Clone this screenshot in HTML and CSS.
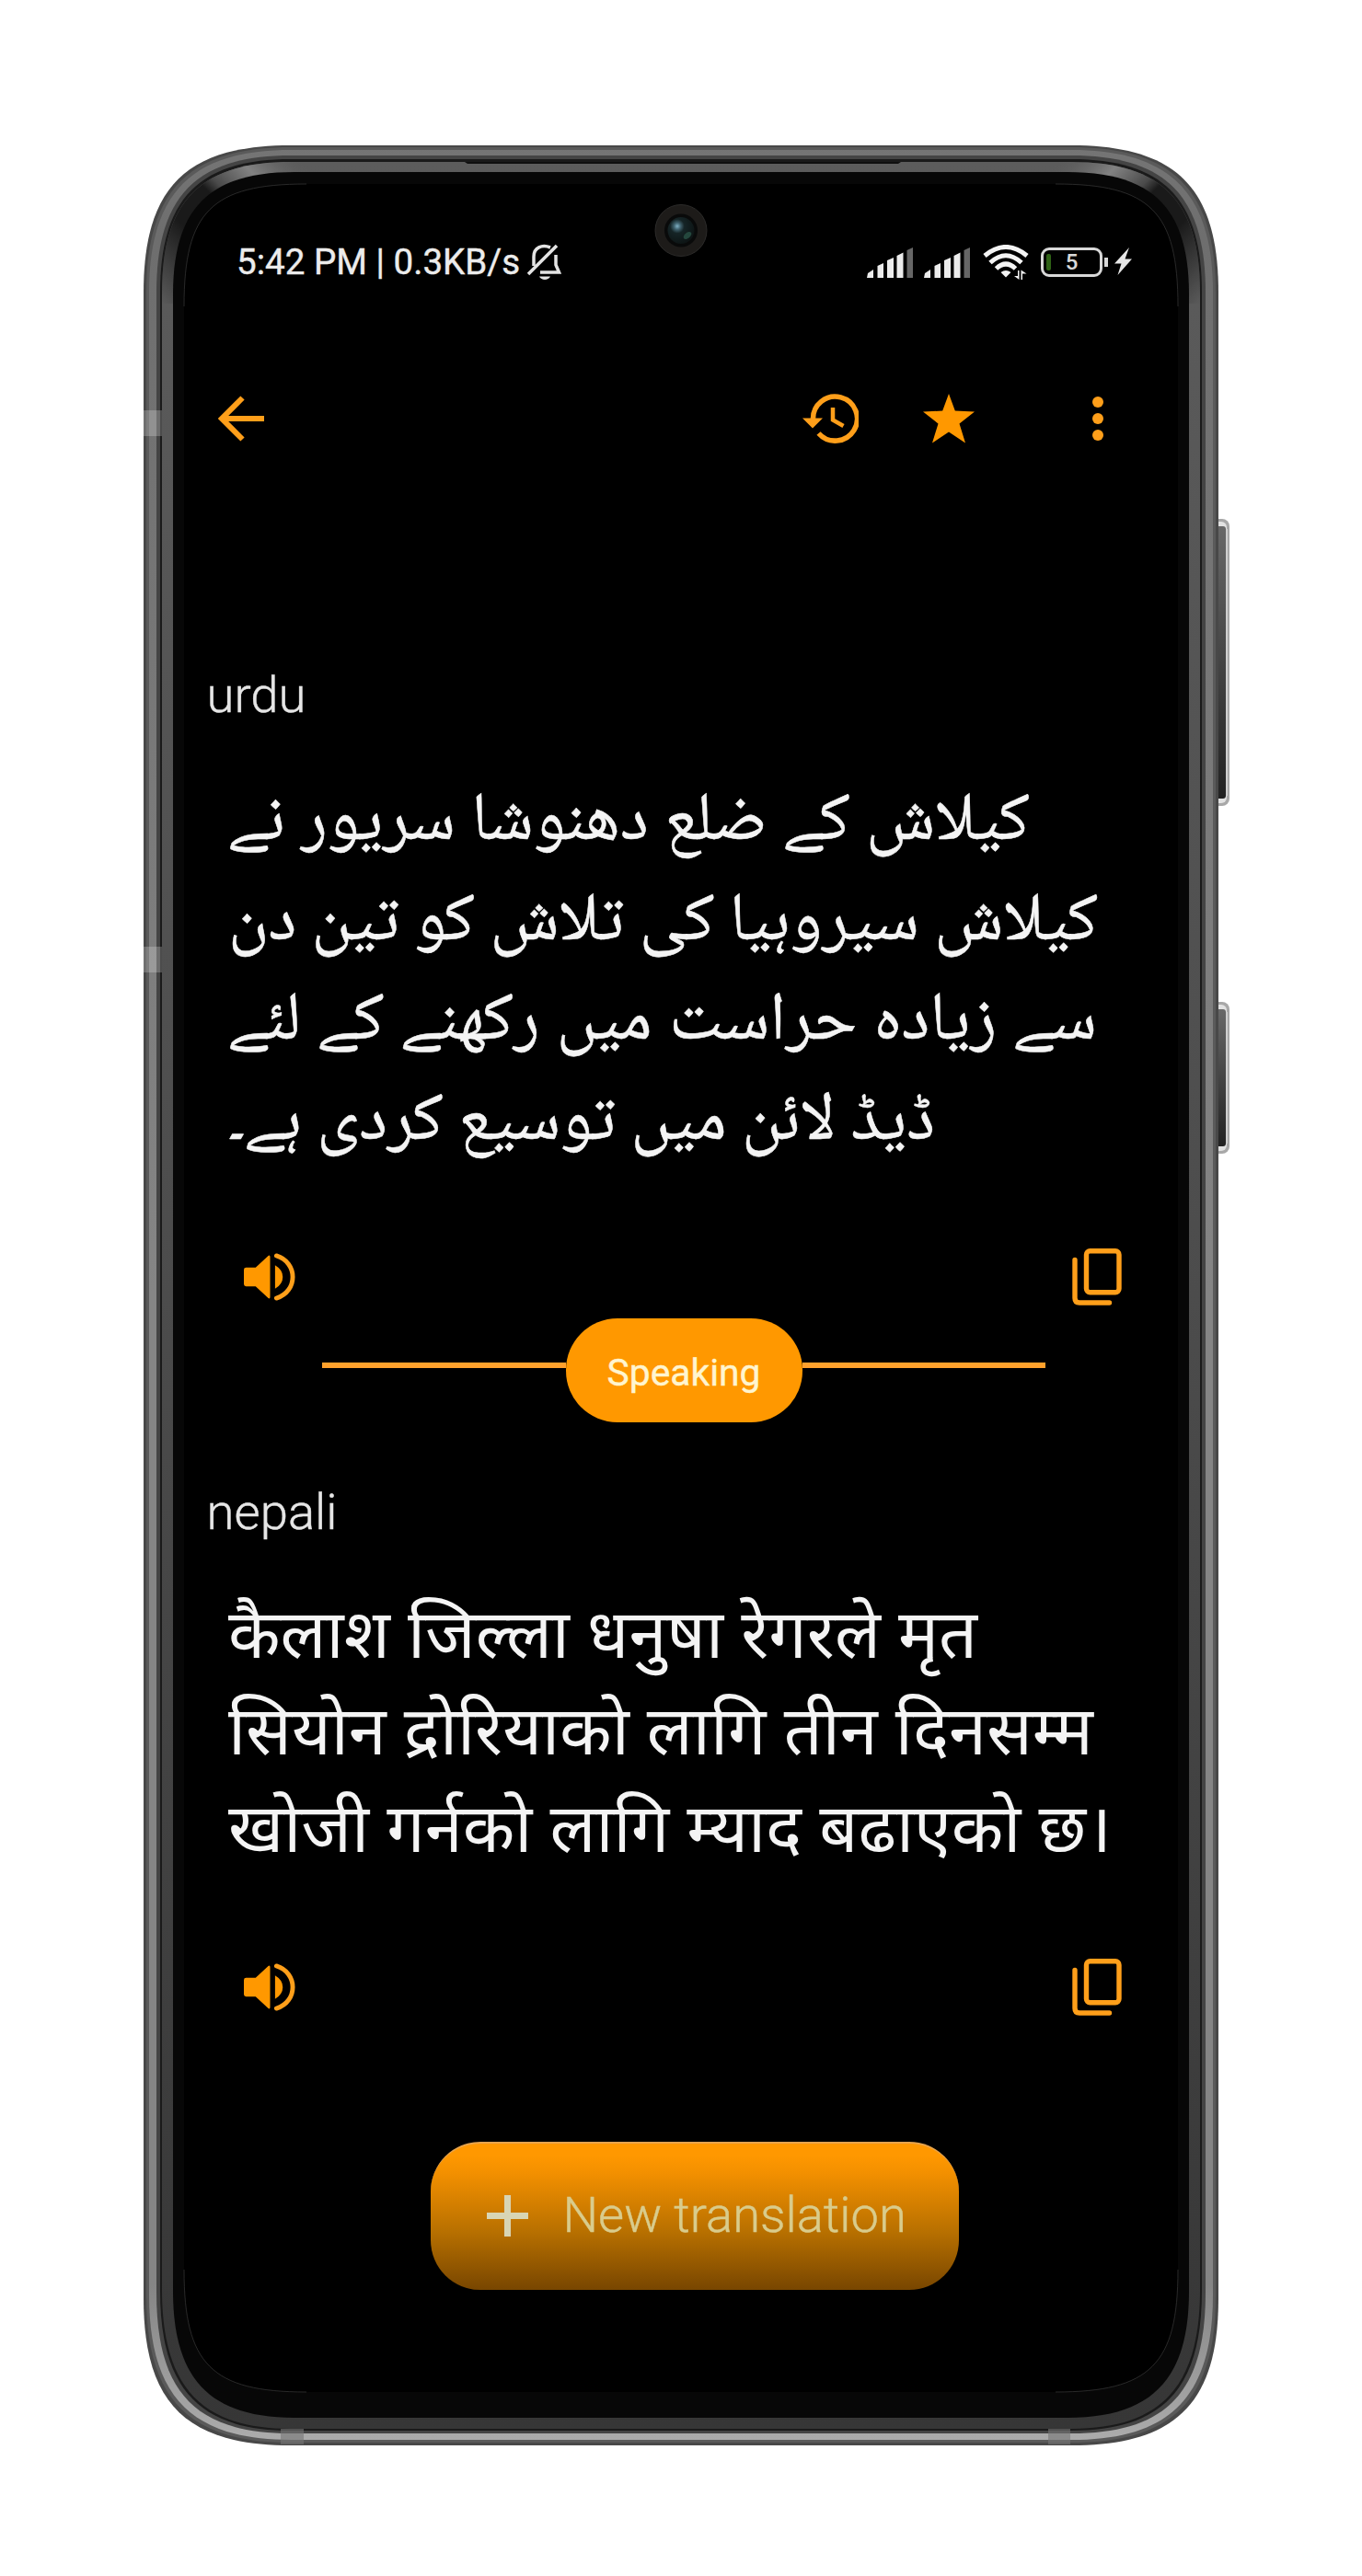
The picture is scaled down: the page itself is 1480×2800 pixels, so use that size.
FILE: index.html
```html
<!DOCTYPE html>
<html lang="en">
<head>
<meta charset="utf-8">
<title>Translation</title>
<link rel="stylesheet" href="styles.css">
</head>
<body>
<main class="stage">
  <svg class="frame" viewBox="0 0 1480 2800" aria-hidden="true">
    <defs>
      <linearGradient id="rim" gradientUnits="userSpaceOnUse" x1="0" y1="158" x2="0" y2="2658">
        <stop offset="0" stop-color="#757575"/><stop offset=".04" stop-color="#6e6e6e"/><stop offset=".5" stop-color="#858585"/><stop offset=".93" stop-color="#858585"/><stop offset="1" stop-color="#adadad"/>
      </linearGradient>
      <linearGradient id="gasket" gradientUnits="userSpaceOnUse" x1="0" y1="176" x2="0" y2="2640">
        <stop offset="0" stop-color="#5c5c5c"/><stop offset=".5" stop-color="#4c4c4c"/><stop offset="1" stop-color="#363636"/>
      </linearGradient>
      <linearGradient id="cornerL" gradientUnits="userSpaceOnUse" x1="176" y1="330" x2="330" y2="176">
        <stop offset="0" stop-color="#1a1a1a" stop-opacity="0"/><stop offset=".35" stop-color="#1a1a1a"/><stop offset=".56" stop-color="#1a1a1a"/><stop offset=".62" stop-color="#4a4a4a"/><stop offset=".78" stop-color="#828282"/><stop offset="1" stop-color="#5c5c5c" stop-opacity="0"/>
      </linearGradient>
      <linearGradient id="cornerR" gradientUnits="userSpaceOnUse" x1="1304" y1="330" x2="1150" y2="176">
        <stop offset="0" stop-color="#1a1a1a" stop-opacity="0"/><stop offset=".35" stop-color="#1a1a1a"/><stop offset=".56" stop-color="#1a1a1a"/><stop offset=".62" stop-color="#4a4a4a"/><stop offset=".78" stop-color="#828282"/><stop offset="1" stop-color="#5c5c5c" stop-opacity="0"/>
      </linearGradient>
      <linearGradient id="key" x1="0" y1="0" x2="0" y2="1">
        <stop offset="0" stop-color="#686868"/><stop offset=".5" stop-color="#444"/><stop offset="1" stop-color="#222"/>
      </linearGradient>
      <radialGradient id="lens" cx=".36" cy=".34" r=".7">
        <stop offset="0" stop-color="#7fb0c4"/><stop offset=".18" stop-color="#3f616d"/><stop offset=".38" stop-color="#152426"/><stop offset="1" stop-color="#0d1414"/>
      </radialGradient>
    </defs>

    <!-- side keys -->
    <rect x="1316" y="564" width="20" height="312" rx="8" fill="#a8a8a8"/>
    <rect x="1316" y="567" width="17" height="306" rx="6" fill="#e2e2e2"/>
    <rect x="1316" y="572" width="16" height="296" rx="3" fill="url(#key)"/>
    <path d="M1333 575v290" stroke="#cfcfcf" stroke-width="2"/>
    <rect x="1316" y="1089" width="20" height="165" rx="8" fill="#a8a8a8"/>
    <rect x="1316" y="1092" width="17" height="159" rx="6" fill="#e2e2e2"/>
    <rect x="1316" y="1097" width="16" height="149" rx="3" fill="url(#key)"/>
    <path d="M1333 1100v143" stroke="#cfcfcf" stroke-width="2"/>

    <!-- metal rim, outside in -->
    <path fill="#484848" d="M156 318C156 204 202 158 316 158H1164C1278 158 1324 204 1324 318V2498C1324 2612 1278 2658 1164 2658H316C202 2658 156 2612 156 2498Z"/>
    <path fill="#5a5a5a" d="M159 318C159 207 205 160 316 160H1164C1275 160 1321 207 1321 318V2496C1321 2608 1275 2655 1164 2655H316C205 2655 159 2608 159 2496Z"/>
    <path fill="url(#rim)" d="M162 318C162 210 208 163 316 163H1164C1272 163 1318 210 1318 318V2494C1318 2605 1272 2652 1164 2652H316C208 2652 162 2605 162 2494Z"/>
    <path fill="#444" d="M170 318C170 214 212 169 316 169H1164C1268 169 1310 214 1310 318V2492C1310 2600 1268 2645 1164 2645H316C212 2645 170 2600 170 2492Z"/>
    <path fill="#1a1a1a" d="M174 318C174 216 216 173 316 173H1164C1264 173 1306 216 1306 318V2490C1306 2596 1264 2642 1164 2642H316C216 2642 174 2596 174 2490Z"/>
    <path fill="url(#gasket)" d="M176 318C176 218 218 176 316 176H1164C1262 176 1304 218 1304 318V2488C1304 2594 1262 2640 1164 2640H316C218 2640 176 2594 176 2488Z"/>
    <path fill="url(#cornerL)" d="M176 330V318C176 218 218 176 316 176H340V330Z"/>
    <path fill="url(#cornerR)" d="M1304 330V318C1304 218 1262 176 1164 176H1140V330Z"/>
    <path fill="#0f0f0f" d="M505 176H979L976 178H508Z"/>

    <!-- bezel and screen -->
    <path fill="#070707" d="M188 320C188 226 228 187 320 187H1160C1252 187 1292 226 1292 320V2490C1292 2586 1252 2628 1160 2628H320C228 2628 188 2586 188 2490Z"/>
    <path fill="#000" d="M200 333C200 230 230 200 333 200H1147C1250 200 1280 230 1280 333V2467C1280 2570 1250 2600 1147 2600H333C230 2600 200 2570 200 2467Z"/>
    <path fill="none" stroke="#3a3a3a" stroke-width=".7" d="M200 333C200 230 230 200 333 200M1147 200C1250 200 1280 230 1280 333M1280 2467C1280 2570 1250 2600 1147 2600M333 2600C230 2600 200 2570 200 2467"/>

    <!-- antenna bands -->
    <path fill="#fff" fill-opacity=".22" d="M156 446h20v28h-20zM156 1029h20v28h-20z"/>
    <path fill="#777" fill-opacity=".6" d="M305 2640h25v17h-25zM1139 2640h24v17h-24z"/>

    <!-- front camera -->
    <circle cx="740" cy="250.500" r="28" fill="#1d1b19" stroke="#2c2b2a"/>
    <circle cx="740" cy="250.500" r="18" fill="#090a0a"/>
    <circle cx="740" cy="250.500" r="14.500" fill="url(#lens)"/>
    <ellipse cx="747" cy="256" rx="5" ry="3" transform="rotate(-40 747 256)" fill="#24473d"/>
  </svg>

  <section class="screen">
    <header class="status">
      <div class="status-left">
        <span class="clock">5:42 PM | 0.3KB/s</span>
        <svg class="bell" viewBox="0 0 38 40">
          <path d="M1 33L32 2" stroke-width="3.500"/>
          <path d="M7 24V14C7 4 16 .5 25 4M31 12V23L34.500 31H14" stroke-width="3.500"/>
          <path d="M13 35.500H25C23 40 15 40 13 35.500Z" class="solid"/>
        </svg>
      </div>
      <div class="status-right">
        <svg class="signal" viewBox="0 0 51 34"><path d="M0 33L1 28L7 24V33ZM11.500 33V20L18 17V33ZM22 33V14L29 11V33ZM32.500 33V9L39.500 5.500V33Z"/><path class="dim" d="M43.500 33V3L50 0V33Z"/></svg>
        <svg class="signal" viewBox="0 0 51 34"><path d="M0 33L1 28L7 24V33ZM11.500 33V20L18 17V33ZM22 33V14L29 11V33ZM32.500 33V9L39.500 5.500V33Z"/><path class="dim" d="M43.500 33V3L50 0V33Z"/></svg>
        <svg class="wifi" viewBox="0 0 50 38">
          <path class="arc" d="M2 12Q25-7 48 12M8 19.500Q25 4 42 19.500M14.500 26Q25 16 35.500 26"/>
          <path d="M25 35.500L19.500 30Q25 26 30.500 30Z"/>
          <path d="M38 28v6h-4l5.500 4V28ZM43 38v-6.500h4.500L41.500 27.500V38Z"/>
        </svg>
        <div class="battery"><span class="charge"></span><span class="level">5</span></div>
        <svg class="bolt" viewBox="0 0 19 31"><path d="M16 0L0 17.500H7.500L3.500 30L19 12.500H11.500Z"/></svg>
      </div>
    </header>

    <nav class="appbar">
      <svg class="back" viewBox="0 0 51 50"><path d="M26.500 2.500L4 25L26.500 47.500M5 25H50"/></svg>
      <svg class="history" viewBox="0 0 61 54">
        <path d="M11.500 28A24 24 0 1 1 17.500 43" stroke-width="5.500"/>
        <path d="M33 15V28.500L44.500 35" stroke-width="4.500"/>
        <path class="solid" d="M0 26.500H22L11 37.500Z"/>
      </svg>
      <svg class="star" viewBox="0 0 56 54"><path d="M28 0L34.800 18.500L56 19.500L39.500 32.500L46 53.500L28 41.500L10 53.500L16.500 32.500L0 19.500L21.200 18.500Z"/></svg>
      <svg class="more" viewBox="0 0 12 48"><circle cx="6" cy="6" r="6"/><circle cx="6" cy="24" r="6"/><circle cx="6" cy="42" r="6"/></svg>
    </nav>

    <article class="panel source">
      <h2 class="lang">urdu</h2>
      <p class="text urdu" lang="ur" dir="rtl"><span class="loose">کیلاش کے ضلع دهنوشا سریور نے</span><br>کیلاش سیروہیا کی تلاش کو تین دن<br><span class="looser">سے زیادہ حراست میں رکھنے کے لئے</span><br>ڈیڈ لائن میں توسیع کردی ہے۔</p>
      <div class="tools">
        <svg class="speaker" viewBox="0 0 58 52"><path class="solid" d="M2.500 15.500H13L27 2.500Q29 1 29 4V48Q29 51 27 49.500L13 36.500H2.500Q0 36.500 0 34V18Q0 15.500 2.500 15.500ZM34.500 13Q43 18 43 26T34.500 39Z"/><path d="M36 2.500C60 10 60 42 36 49.500"/></svg>
        <svg class="copy" viewBox="0 0 54 62"><rect x="15.500" y="2.700" width="35.500" height="45" rx="4"/><path d="M3 12.500V54Q3 59 8 59H40.500"/></svg>
      </div>
    </article>

    <div class="divider"><span class="pill">Speaking</span></div>

    <article class="panel target">
      <h2 class="lang">nepali</h2>
      <p class="text nepali" lang="ne">कैलाश जिल्ला धनुषा रेगरले मृत<br>सियोन द्रोरियाको लागि तीन दिनसम्म<br>खोजी गर्नको लागि म्याद बढाएको छ।</p>
      <div class="tools">
        <svg class="speaker" viewBox="0 0 58 52"><path class="solid" d="M2.500 15.500H13L27 2.500Q29 1 29 4V48Q29 51 27 49.500L13 36.500H2.500Q0 36.500 0 34V18Q0 15.500 2.500 15.500ZM34.500 13Q43 18 43 26T34.500 39Z"/><path d="M36 2.500C60 10 60 42 36 49.500"/></svg>
        <svg class="copy" viewBox="0 0 54 62"><rect x="15.500" y="2.700" width="35.500" height="45" rx="4"/><path d="M3 12.500V54Q3 59 8 59H40.500"/></svg>
      </div>
    </article>

    <button class="new" type="button">
      <svg class="plus" viewBox="0 0 45 45"><path d="M22.500 0V45M0 22.500H45"/></svg>
      <span class="new-label">New translation</span>
    </button>
  </section>
</main>
</body>
</html>
```
FILE: styles.css
```css
* { box-sizing: border-box; }
body { margin: 0; background: #fff; font-family: Roboto, sans-serif; }

.stage { position: relative; width: 1480px; height: 2800px; padding: 200px; }
.frame { position: absolute; inset: 0; width: 1480px; height: 2800px; }
.screen { position: relative; width: 1080px; height: 2400px; display: flex; flex-direction: column; color: #f4f4f4; }
svg { display: block; flex: none; }

.status { height: 168px; display: flex; align-items: center; justify-content: space-between; padding: 1px 50px 0 57px; color: #ececec; }
.status-left, .status-right { display: flex; align-items: center; }
.clock { font-size: 38.600px; line-height: 46px; white-space: nowrap; -webkit-text-stroke: .4px #ececec; }
.bell { width: 38px; height: 40px; margin-left: 8px; fill: none; stroke: #e4e4e4; }
.bell .solid { fill: #e4e4e4; stroke: none; }
.signal { width: 51px; height: 34px; margin: 2px 11px 0 0; fill: #ececec; }
.signal .dim { fill: #666; }
.wifi { width: 50px; height: 38px; margin-left: 2px; fill: #f4f4f4; }
.wifi .arc { fill: none; stroke: #f4f4f4; stroke-width: 5; }
.battery { position: relative; width: 67px; height: 32px; margin: 0 13px; border: 3.500px solid #d8d8d8; border-radius: 9px; display: flex; align-items: center; justify-content: center; }
.battery::after { content: ""; position: absolute; left: 66px; top: 8px; width: 4px; height: 10px; background: #d8d8d8; }
.charge { position: absolute; left: 3px; top: 4px; width: 5px; height: 18px; border-radius: 2px; background: #2f6216; }
.level { font-size: 24px; line-height: 26px; font-weight: 500; color: #d8d8d8; }
.bolt { width: 19px; height: 31px; fill: #e6e6e6; }

.appbar { height: 174px; display: flex; align-items: center; padding-left: 37px; fill: none; stroke: #ff9f1a; }
.back { width: 51px; height: 50px; stroke-width: 6; }
.history { width: 61px; height: 54px; margin-left: 584px; }
.history .solid { fill: #ff9f1a; stroke: none; }
.star { width: 56px; height: 54px; margin-left: 70px; fill: #ff9800; stroke: none; }
.more { width: 12px; height: 48px; margin-left: 128px; fill: #ff9f1a; stroke: none; }

.source { padding-top: 181px; }
.target { padding-top: 65px; }
.lang { margin: 0 0 0 24.500px; font-size: 54.500px; line-height: 64px; font-weight: 300; color: #e6e6e6; -webkit-text-stroke: .4px #e6e6e6; }
.text { margin: 0 0 0 48px; white-space: nowrap; text-align: left; }
.urdu { margin-top: 55px; font-family: "Noto Naskh Arabic", "DejaVu Sans", serif; font-size: 74.200px; line-height: 108.700px; -webkit-text-stroke: .5px #f4f4f4; }
.loose { word-spacing: 1px; }
.looser { word-spacing: 1.800px; }
.nepali { margin-top: 57px; font-family: "Noto Sans Devanagari", "Noto Sans", sans-serif; font-size: 73.700px; line-height: 105.500px; }
.tools { height: 62px; margin-top: 80px; padding: 0 61.500px 0 64.500px; display: flex; align-items: center; justify-content: space-between; }
.target .tools { margin-top: 81px; }
.speaker { width: 57px; height: 52px; fill: none; stroke: #ff9f1a; stroke-width: 5; stroke-linecap: round; }
.speaker .solid { fill: #ff9800; stroke: none; }
.copy { width: 54px; height: 62px; fill: none; stroke: #ff9f1a; stroke-width: 5.400; stroke-linecap: round; }

.divider { height: 113px; margin: 14px 144px 0 150px; display: flex; align-items: center; }
.divider::before, .divider::after { content: ""; flex: 1; height: 6px; margin-bottom: 11px; background: #ffa12c; }
.pill { width: 257px; height: 113px; border-radius: 56px; background: #ff9800; color: #fff5cf; font-size: 40.800px; line-height: 118px; text-align: center; -webkit-text-stroke: .4px #fff5cf; }

.new { width: 574px; height: 161px; margin: 137px 0 0 268px; padding: 0 0 3px 61px; border: 0; border-radius: 54px; border-top: 2px solid #e8a44c; background: linear-gradient(#ff9800 8%, #f39000 20%, #b87000 60%, #784600); display: flex; align-items: center; font-family: inherit; color: #d9cc8c; }
.plus { width: 45px; height: 45px; fill: none; stroke: #d8d5b4; stroke-width: 7; }
.new-label { margin-left: 37.500px; font-size: 54.300px; font-weight: 300; line-height: 64px; white-space: nowrap; -webkit-text-stroke: .4px #d9cc8c; }
```
